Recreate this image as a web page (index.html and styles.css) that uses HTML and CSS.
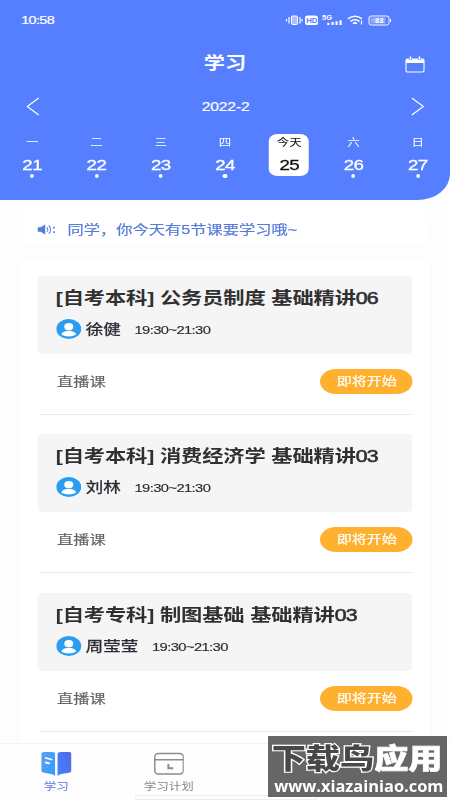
FILE: index.html
```html
<!DOCTYPE html>
<html lang="zh-CN">
<head>
<meta charset="utf-8">
<title>学习</title>
<link rel="stylesheet" href="styles.css">
</head>
<body>
<div class="app">
  <header class="header">
    <div class="status">
      <span class="clock">10:58</span>
      <svg class="status-icons" viewBox="0 0 108 14" preserveAspectRatio="none" fill="none" stroke="#fff">
        <rect x="6.5" y="3" width="6" height="8.5" rx="1" fill="#fff" fill-opacity=".5"/>
        <path d="M4 4v6.5M15 4v6.5M1.5 6v2.5M17 6v2.5" stroke-width="1.2"/>
        <rect x="20" y="2.5" width="13" height="9.5" rx="2.5" fill="#fff" stroke="none"/>
        <text class="hd" x="21.2" y="10">HD</text>
        <text class="net" x="37" y="6.5">5G</text>
        <path d="M43.3 12V9.8M47.6 12V9M51.6 12V8.2M55.6 12V7.2" stroke-width="2.2"/>
        <path d="M63 5.8q7-5 14 0M65.5 8.3q4.500-3.200 9 0M68 10.600q2-1.500 4 0" stroke-width="1.600"/>
        <path d="M76.500 7.500v4" stroke-width="1.2"/>
        <rect x="84" y="3" width="20" height="9" rx="2.200"/>
        <rect x="85.500" y="4.500" width="15" height="6" fill="#fff" fill-opacity=".35" stroke="none"/>
        <path d="M105.500 6v3"/>
        <text class="net" x="90" y="10.200">83</text>
      </svg>
    </div>
    <div class="title-row">
      <h1>学习</h1>
      <svg class="calendar" viewBox="0 0 20 17" preserveAspectRatio="none" fill="none" stroke="#fff">
        <rect x="1" y="3" width="18" height="13" rx="1.200" stroke-width="1.100"/>
        <path d="M1 3h18v4H1z" fill="#fff" stroke="none"/>
        <path d="M5.500 1v3M14.500 1v3" stroke="#567fff" stroke-width="3.200"/>
        <path d="M5.500.500v3.200M14.500.500v3.200" stroke-width="1.700"/>
      </svg>
    </div>
    <div class="month-row">
      <svg viewBox="0 0 11 19" preserveAspectRatio="none"><path d="M10.500 1L.800 9.500l9.700 8.500"/></svg>
      <span>2022-2</span>
      <svg viewBox="0 0 11 19" preserveAspectRatio="none"><path d="M.500 1l9.700 8.500L.500 18"/></svg>
    </div>
    <div class="week">
      <div class="day"><span>一</span><b>21</b></div>
      <div class="day"><span>二</span><b>22</b></div>
      <div class="day"><span>三</span><b>23</b></div>
      <div class="day"><span>四</span><b>24</b></div>
      <div class="day today"><span>今天</span><b>25</b></div>
      <div class="day"><span>六</span><b>26</b></div>
      <div class="day"><span>日</span><b>27</b></div>
    </div>
  </header>

  <div class="notice">
    <svg viewBox="0 0 17 12" preserveAspectRatio="none" fill="none" stroke="#567bdc">
      <path d="M0 3.500h3L7.500.500v11L3 8.500H0z" fill="#567bdc" stroke="none"/>
      <path d="M9 3.500q2 2.500 0 5M11 1.500q3.500 4.500 0 9"/>
      <path d="M16 3v1.800M16 8v1.800" stroke-width="1.600"/>
    </svg>
    <span>同学，你今天有5节课要学习哦~</span>
  </div>

  <main class="list">
    <article class="lesson">
      <div class="card">
        <h2>[自考本科] 公务员制度 基础精讲<i>06</i></h2>
        <div class="teacher"><svg viewBox="0 0 20 20"><circle cx="10" cy="10" r="10" fill="#2b9df0"/><circle cx="10" cy="7.700" r="3.600" fill="#fff"/><path d="M4 15.500q1.500-3.700 6-3.700t6 3.700q-2.500 2-6 2t-6-2z" fill="#fff"/></svg><span>徐健</span><time>19:30~21:30</time></div>
      </div>
      <div class="action"><span>直播课</span><button>即将开始</button></div>
    </article>
    <article class="lesson">
      <div class="card">
        <h2>[自考本科] 消费经济学 基础精讲<i>03</i></h2>
        <div class="teacher"><svg viewBox="0 0 20 20"><circle cx="10" cy="10" r="10" fill="#2b9df0"/><circle cx="10" cy="7.700" r="3.600" fill="#fff"/><path d="M4 15.500q1.500-3.700 6-3.700t6 3.700q-2.500 2-6 2t-6-2z" fill="#fff"/></svg><span>刘林</span><time>19:30~21:30</time></div>
      </div>
      <div class="action"><span>直播课</span><button>即将开始</button></div>
    </article>
    <article class="lesson">
      <div class="card">
        <h2>[自考专科] 制图基础 基础精讲<i>03</i></h2>
        <div class="teacher"><svg viewBox="0 0 20 20"><circle cx="10" cy="10" r="10" fill="#2b9df0"/><circle cx="10" cy="7.700" r="3.600" fill="#fff"/><path d="M4 15.500q1.500-3.700 6-3.700t6 3.700q-2.500 2-6 2t-6-2z" fill="#fff"/></svg><span>周莹莹</span><time>19:30~21:30</time></div>
      </div>
      <div class="action"><span>直播课</span><button>即将开始</button></div>
    </article>
  </main>

  <nav class="tabs">
    <div class="tab active">
      <svg viewBox="0 0 31 24" preserveAspectRatio="none">
        <defs>
          <linearGradient id="pageLeft" x1="0" y1="0" x2="1" y2="1"><stop stop-color="#5da0ee"/><stop offset="1" stop-color="#319cff"/></linearGradient>
          <linearGradient id="pageRight" x1="1" y1="0" x2="0" y2="1"><stop stop-color="#5568e8"/><stop offset="1" stop-color="#3f83fb"/></linearGradient>
        </defs>
        <path d="M0 2Q0 0 3 0h8q3 0 3 2v22q-1.500-1.500-4-2l-7-1.200q-3-.500-3-2.500z" fill="url(#pageLeft)"/>
        <path d="M31 2q0-2-3-2h-8q-3.500 0-3.500 2v22q1.500-1.500 4-2l7.500-1.200q3-.500 3-2.500z" fill="url(#pageRight)"/>
        <path d="M4.500 6l6 1.500M4.500 10.500l3.500.800" stroke="#fff" stroke-width="1.800" stroke-linecap="round"/>
      </svg>
      <span>学习</span>
    </div>
    <div class="tab">
      <svg viewBox="0 0 31 24" preserveAspectRatio="none" fill="none" stroke="#8c8c8c" stroke-width="1.500">
        <rect x="1" y="1.500" width="29" height="20.500" rx="3.500"/>
        <path d="M1 7.800h29"/><path d="M14.800 12v4.300h5" stroke-width="2"/>
      </svg>
      <span>学习计划</span>
    </div>
  </nav>
</div>
<div class="watermark">
  <div class="brand"><span>下载鸟</span>应用</div>
  <div class="site">www.xiazainiao.com</div>
</div>
</body>
</html>
```

FILE: styles.css
```css
* { box-sizing: border-box; }
body {
  margin: 0;
  width: 450px;
  height: 800px;
  overflow: hidden;
  position: relative;
  background: #fefefe;
  font-family: "Liberation Sans", "Noto Sans CJK SC", sans-serif;
}
h1, h2 { margin: 0; }
svg { display: block; flex: none; }

/* The layout is 360 units wide and is stretched to fill the window. */
.app {
  width: 360px;
  height: 800px;
  overflow: hidden;
  display: flex;
  flex-direction: column;
  transform: scaleX(1.25);
  transform-origin: 0 0;
}

.header {
  flex: none;
  height: 200px;
  background: #567fff;
  color: #fff;
  border-bottom-right-radius: 26px;
}
.status {
  height: 40px;
  padding: 0 46px 0 17px;
  display: flex;
  align-items: center;
  justify-content: space-between;
}
.clock { font-size: 11.5px; letter-spacing: -.5px; -webkit-text-stroke: .2px #fff; }
.status-icons { width: 86.4px; height: 14px; }
.hd { font-size: 7.8px; font-weight: bold; fill: #567fff; stroke: none; }
.net { font-size: 7.5px; font-weight: bold; fill: #fff; stroke: none; }

.title-row {
  height: 46px;
  display: grid;
  grid-template-columns: 1fr auto 1fr;
  align-items: center;
  padding: 2px 20px 0;
}
.title-row h1 { grid-column: 2; font-size: 17px; line-height: 24px; }
.calendar { width: 16px; height: 17px; justify-self: end; }

.month-row {
  height: 41px;
  padding: 0 20px 0 21px;
  display: flex;
  align-items: center;
  justify-content: space-between;
  font-size: 12.5px;
  letter-spacing: -.1px;
  -webkit-text-stroke: .2px #fff;
}
.month-row svg { width: 10.5px; height: 19px; fill: none; stroke: #fff; stroke-width: 1; }

.week { display: grid; grid-template-columns: repeat(7, 1fr); justify-items: center; padding-top: 7px; }
.day {
  width: 32px;
  height: 42px;
  display: flex;
  flex-direction: column;
  align-items: center;
  border-radius: 7px;
}
.day span { flex: none; font-size: 10px; line-height: 18px; height: 22px; white-space: nowrap; }
.day b { flex: none; font-size: 15px; letter-spacing: -.5px; font-weight: normal; line-height: 18px; height: 18px; -webkit-text-stroke: .3px currentColor; }
.day:not(.today)::after { content: ""; width: 3.2px; height: 4px; border-radius: 50%; background: #fff; flex: none; }
.today { background: #fff; color: #111; }

.notice {
  flex: none;
  margin: 8px 16px 0;
  height: 38px;
  padding: 5px 0 0 14px;
  display: flex;
  align-items: center;
  gap: 10px;
  border-radius: 8px;
  background: #fff;
  box-shadow: 0 3px 5px rgba(0, 0, 0, .015);
  color: #567bdc;
  font-size: 13px;
  -webkit-text-stroke: .2px #567bdc;
}
.notice svg { width: 14px; height: 11px; }
.notice span { line-height: 20px; }

.list {
  flex: 1;
  min-height: 0;
  overflow: hidden;
  margin: 12px 16px 0;
  padding: 18px 13.6px 0;
  background: #fff;
  box-shadow: 0 0 5px rgba(0, 0, 0, .035);
}
.lesson { height: 158.4px; }
.card { height: 78px; padding: 12px 15px; border-radius: 4px; background: #f5f5f5; }
.card h2 { font-size: 17px; line-height: 22px; letter-spacing: -.1px; color: #303030; white-space: nowrap; }
.card i { font-style: normal; font-weight: normal; letter-spacing: -.7px; -webkit-text-stroke: .6px #303030; }
.teacher { display: flex; align-items: center; height: 20px; margin-top: 9px; color: #2a2a35; }
.teacher svg { width: 20px; height: 20px; }
.teacher span { margin-left: 4px; font-size: 14px; line-height: 20px; -webkit-text-stroke: .3px #2a2a35; }
.teacher time { margin: 2px 0 0 11px; font-size: 11.8px; letter-spacing: -.48px; -webkit-text-stroke: .15px #2a2a35; }
.action {
  height: 61px;
  padding: 0 0 5px 14px;
  margin-left: 2px;
  display: flex;
  align-items: center;
  justify-content: space-between;
  border-bottom: 1px solid #e9e9e9;
  color: #666;
  font-size: 13px;
}
.action span { margin-top: -2px; -webkit-text-stroke: .2px #666; }
.action button {
  width: 74px;
  height: 25px;
  padding: 1px 0 0;
  border: 0;
  border-radius: 13px;
  background: #ffb02e;
  color: #fff;
  font: 12px/24px "Liberation Sans", "Noto Sans CJK SC", sans-serif;
  -webkit-text-stroke: .2px #fff;
}

.tabs {
  flex: none;
  height: 57px;
  display: grid;
  grid-template-columns: repeat(4, 90px);
  background: #fefefe;
  border-top: 1px solid #f3f3f3;
  position: relative;
}
.tabs::after {
  content: "";
  position: absolute;
  left: 108px;
  bottom: 0;
  width: 144px;
  height: 3px;
  border: 1px solid #ededed;
  border-radius: 2px;
  background: #fff;
}
.tab { display: flex; flex-direction: column; align-items: center; padding-top: 8px; font-size: 10px; color: #888; }
.tab svg { width: 24.5px; height: 24px; }
.tab span { line-height: 14px; margin-top: 4px; }
.active { color: #5578d2; }

.watermark {
  position: absolute;
  left: 268px;
  top: 736px;
  width: 179px;
  height: 61px;
  background: #666;
  color: #fff;
  white-space: nowrap;
}
.brand {
  width: 146px;
  padding: 8px 0 0 3px;
  font: 900 28px/28px "Noto Sans CJK SC", sans-serif;
  height: 41px;
  transform: translateY(-1px) scaleX(1.22);
  transform-origin: 0 0;
  -webkit-text-stroke: .6px #fff;
}
.brand span { color: #484848; -webkit-text-stroke: 2.4px #fff; paint-order: stroke fill; }
.site {
  width: 172px;
  padding-left: 6px;
  font: bold 16px/17px "Open Sans", sans-serif;
  height: 18px;
  transform: translateY(1px) scaleX(1.025);
  transform-origin: 0 0;
}
```
